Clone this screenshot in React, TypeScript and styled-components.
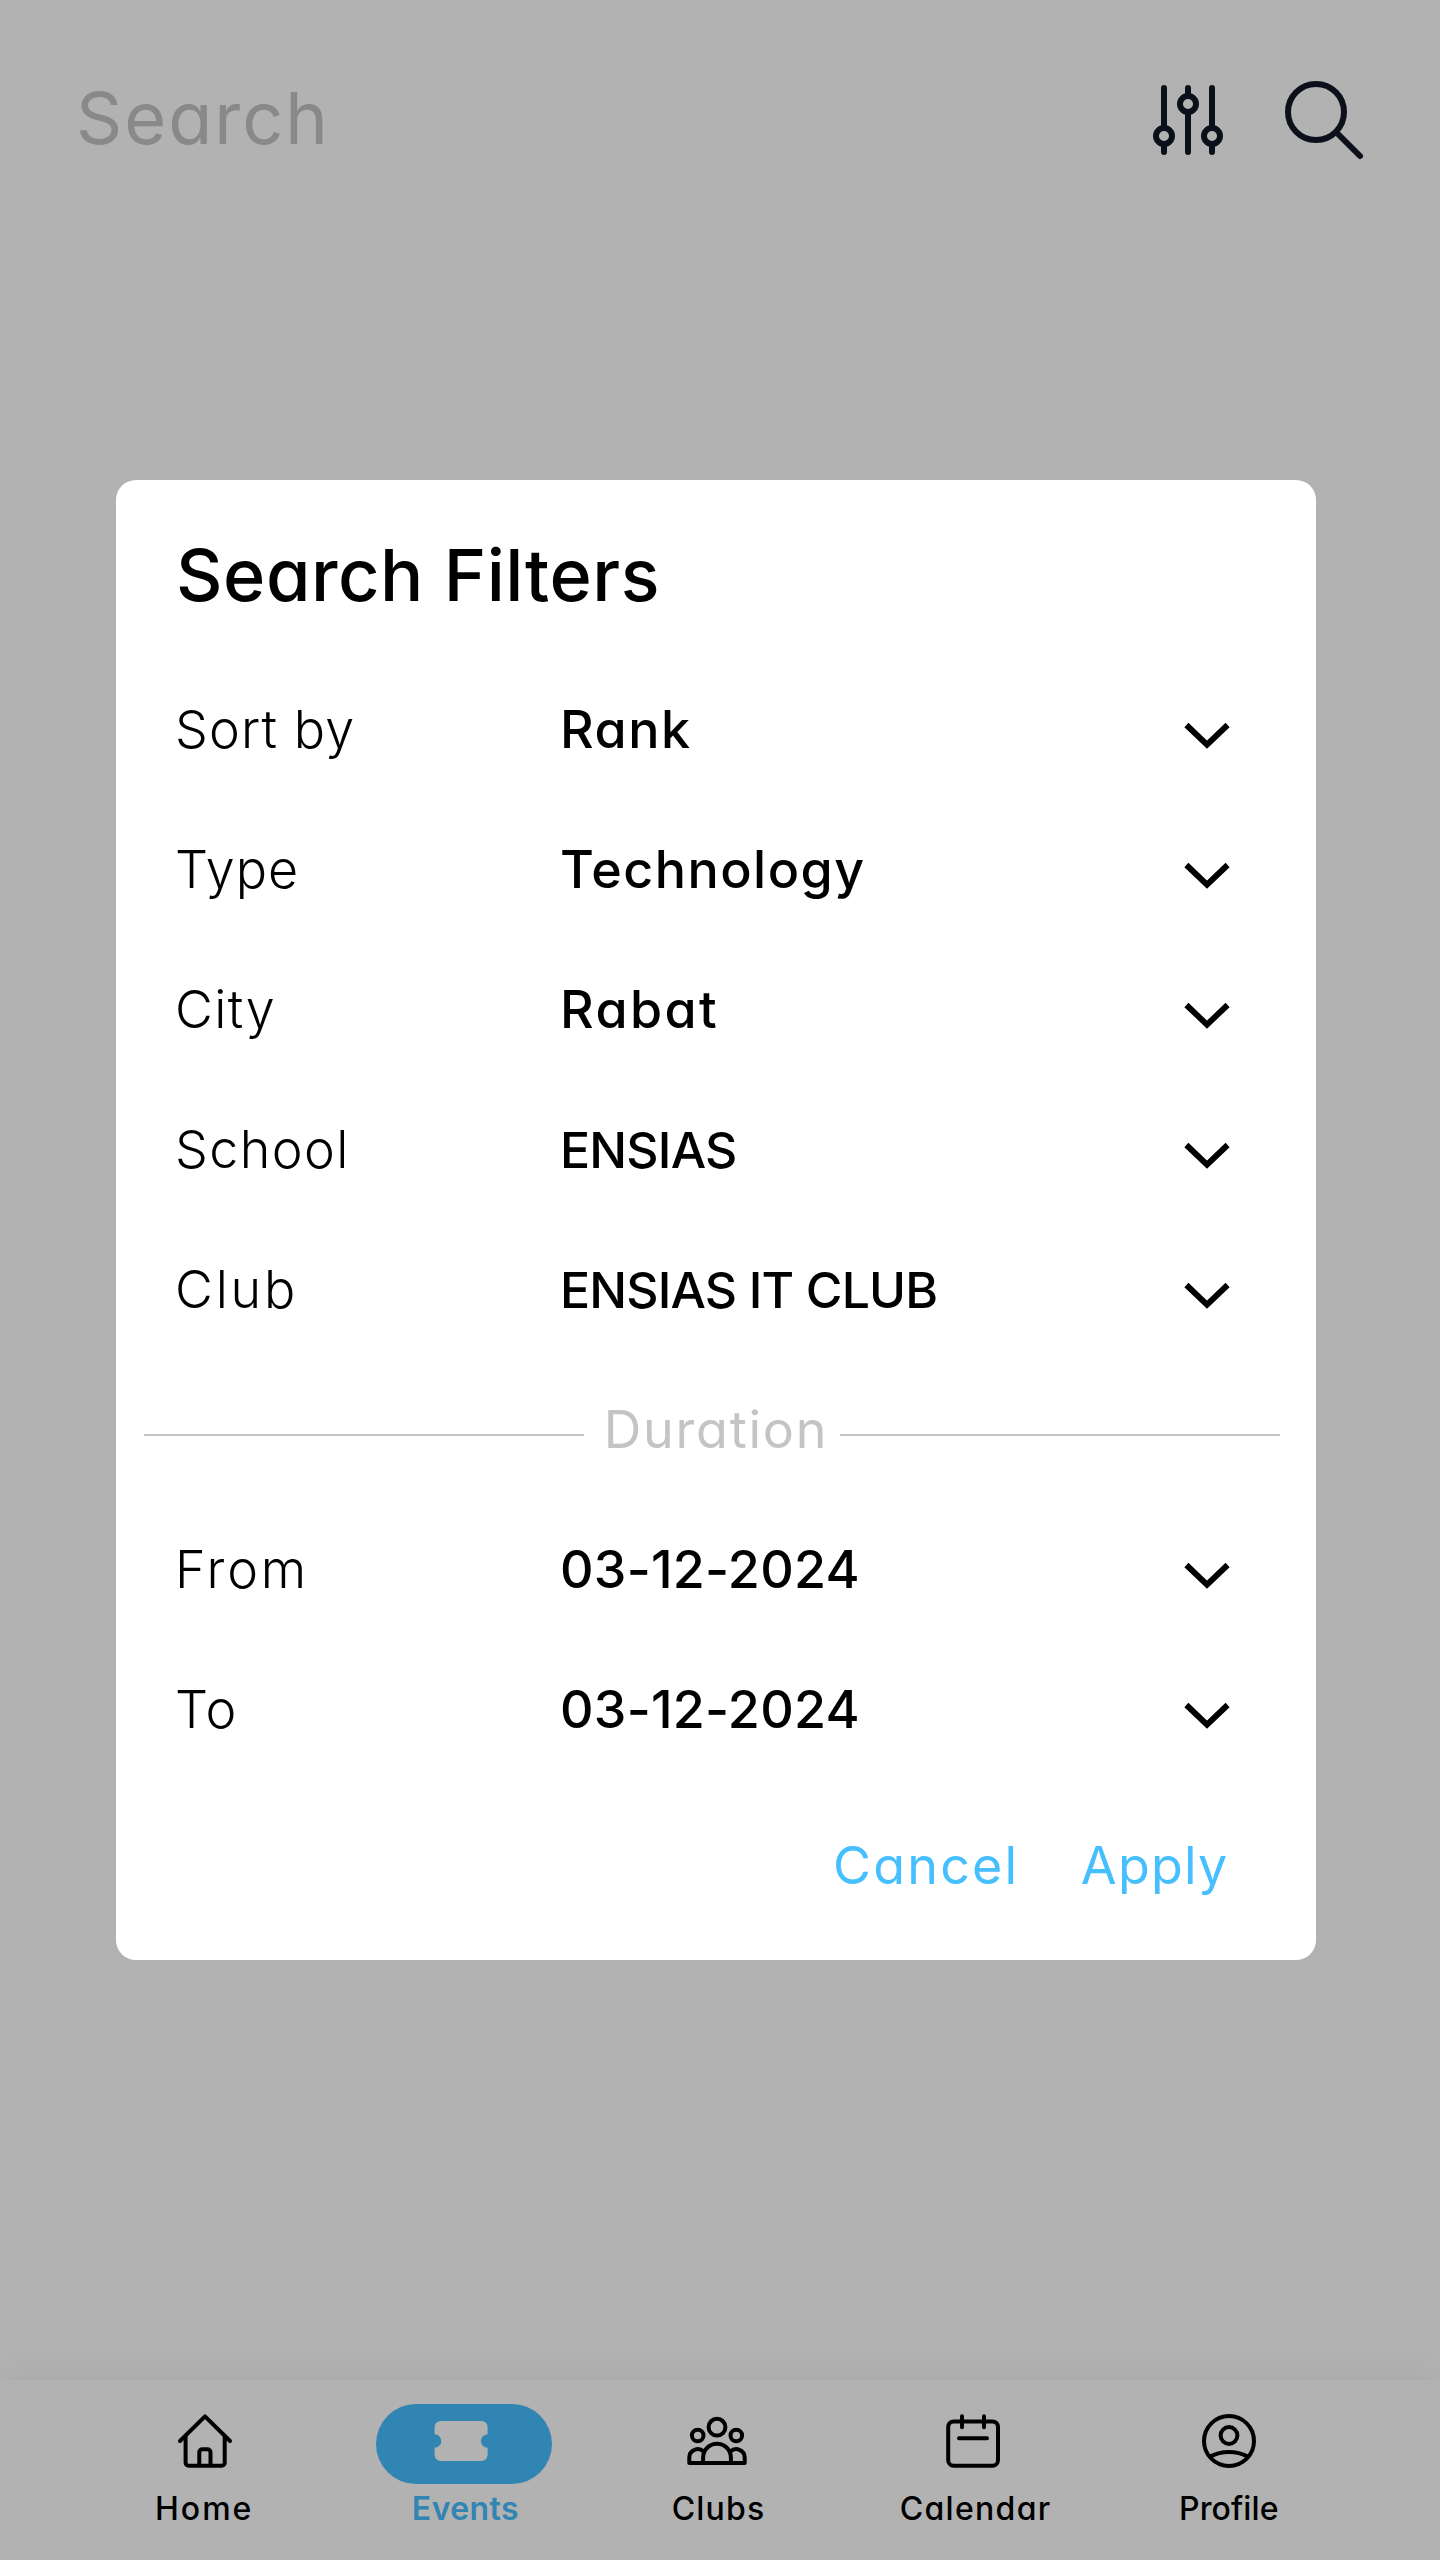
import React from "react";
import styled, { createGlobalStyle } from "styled-components";

const GlobalStyle = createGlobalStyle`
  * { box-sizing: border-box; }
  body {
    margin: 0;
    background: #ffffff;
    color: #000000;
    font-family: Inter, "Liberation Sans", sans-serif;
    font-feature-settings: "cv11";
  }
  button {
    border: 0;
    padding: 0;
    background: none;
    color: inherit;
    font: inherit;
    font-feature-settings: inherit;
  }
`;

const Screen = styled.div`
  position: relative;
  display: flex;
  flex-direction: column;
  width: 1440px;
  height: 2560px;
  overflow: hidden;
`;

const SearchHeader = styled.header`
  display: flex;
  align-items: center;
  height: 240px;
  padding: 0 68px 0 76px;
`;

const SearchField = styled.div`
  flex: 1;
  padding-bottom: 4px;
  color: #c4c4c4;
  font-size: 72px;
  line-height: 84px;
  letter-spacing: 2px;
`;

const HeaderActions = styled.div`
  display: flex;
  gap: 40px;

  svg {
    display: block;
    fill: none;
    stroke: #121826;
    stroke-width: 6;
    stroke-linecap: round;
  }
`;

const Results = styled.main`
  flex: 1;
`;

const TabBar = styled.nav`
  display: grid;
  grid-template-columns: repeat(5, 256px);
  height: 180px;
  padding: 24px 80px 0;
  background: #ffffff;
  box-shadow: 0 -4px 30px rgba(0, 0, 0, 0.06);
`;

const Tab = styled.button<{ $active?: boolean }>`
  display: flex;
  flex-direction: column;
  align-items: center;
  height: 130px;
  color: ${(p) => (p.$active ? "#46bfff" : "#000000")};
`;

const TabIcon = styled.span<{ $active?: boolean }>`
  display: flex;
  align-items: center;
  justify-content: center;
  width: 176px;
  height: 80px;
  padding: 0 6px 6px 0;
  border-radius: 40px;
  background: ${(p) => (p.$active ? "#46bfff" : "transparent")};

  svg {
    display: block;
    fill: none;
    stroke: #000000;
    stroke-width: 4;
    stroke-linecap: round;
    stroke-linejoin: round;
  }
`;

const TabLabel = styled.span<{ $weight: number; $tracking: number; $shift: number }>`
  font-size: 32px;
  line-height: 50px;
  font-weight: ${(p) => p.$weight};
  letter-spacing: ${(p) => p.$tracking}px;
  transform: translateX(${(p) => p.$shift}px);
`;

const Backdrop = styled.div`
  position: absolute;
  inset: 0;
  display: flex;
  flex-direction: column;
  align-items: flex-start;
  padding: 480px 0 0 116px;
  background: rgba(0, 0, 0, 0.3);
`;

const Dialog = styled.section`
  display: flex;
  flex-direction: column;
  width: 1200px;
  height: 1480px;
  border-radius: 20px;
  background: #ffffff;
`;

const DialogTitle = styled.h1`
  display: flex;
  align-items: center;
  height: 180px;
  margin: 0;
  padding: 8px 0 0 60px;
  font-size: 72px;
  font-weight: 530;
  letter-spacing: 0.55px;
`;

const FilterRow = styled.div`
  display: grid;
  grid-template-columns: 385px 1fr 46px;
  align-items: center;
  height: 140px;
  padding: 0 86.5px 0 59px;
  line-height: 60px;
`;

const FilterLabel = styled.span<{ $tracking: number }>`
  padding-bottom: 1px;
  font-size: 52px;
  font-weight: 300;
  letter-spacing: ${(p) => p.$tracking}px;
`;

const FilterValue = styled.span<{ $tracking: number; $size?: number }>`
  padding-bottom: 1px;
  font-size: ${(p) => p.$size ?? 52}px;
  font-weight: 530;
  letter-spacing: ${(p) => p.$tracking}px;
`;

const Chevron = styled.svg`
  display: block;
  margin-top: 12px;
  fill: none;
  stroke: #000000;
  stroke-width: 5.9;
`;

const SectionDivider = styled.div`
  display: flex;
  align-items: center;
  justify-content: space-between;
  height: 140px;
  padding: 0 36px 0 28px;
`;

const DividerLine = styled.span`
  width: 440px;
  height: 2px;
  margin-top: 10px;
  background: #c4c4c4;
`;

const DividerText = styled.span`
  padding: 0 0 1px 8px;
  color: #c4c4c4;
  font-size: 52px;
  line-height: 60px;
  letter-spacing: 1.75px;
`;

const DialogActions = styled.div`
  display: flex;
  align-items: center;
  justify-content: flex-end;
  gap: 61.5px;
  height: 180px;
  padding: 0 87.5px 8px 0;
`;

const TextButton = styled.button<{ $tracking: number }>`
  color: #46bfff;
  font-size: 52px;
  line-height: 60px;
  letter-spacing: ${(p) => p.$tracking}px;
`;

type Filter = {
  label: string;
  labelTracking: number;
  value: string;
  valueTracking: number;
  valueSize?: number;
};

const filters: Filter[] = [
  { label: "Sort by", labelTracking: 1.1, value: "Rank", valueTracking: 1.5 },
  { label: "Type", labelTracking: 1, value: "Technology", valueTracking: 1.45 },
  { label: "City", labelTracking: 1.4, value: "Rabat", valueTracking: 2.4 },
  { label: "School", labelTracking: 1.4, value: "ENSIAS", valueTracking: -0.8, valueSize: 50 },
  { label: "Club", labelTracking: 2.8, value: "ENSIAS IT CLUB", valueTracking: -0.85, valueSize: 50 },
];

const durations: Filter[] = [
  { label: "From", labelTracking: 2.8, value: "03-12-2024", valueTracking: 0.25 },
  { label: "To", labelTracking: 1.5, value: "03-12-2024", valueTracking: 0.25 },
];

const SlidersIcon = () => (
  <svg width="96" height="96" viewBox="0 0 96 96">
    <path d="M24 16V56M24 72V80M48 16V24M48 40V80M72 16V56M72 72V80" />
    <circle cx="24" cy="64" r="8" />
    <circle cx="48" cy="32" r="8" />
    <circle cx="72" cy="64" r="8" />
  </svg>
);

const SearchIcon = () => (
  <svg width="96" height="96" viewBox="0 0 96 96">
    <circle cx="40" cy="40" r="28" />
    <path d="M60.5 60.5L84 84" />
  </svg>
);

const HomeIcon = () => (
  <svg width="64" height="64" viewBox="0 0 64 64">
    <path d="M7 32L32 7.4L57 32" />
    <path d="M12.6 27V53.7A3 3 0 0 0 15.6 56.7H48.7A3 3 0 0 0 51.7 53.7V27" />
    <path d="M26.3 56V43.2A3 3 0 0 1 29.3 40.2H34.5A3 3 0 0 1 37.5 43.2V56" />
  </svg>
);

const TicketIcon = () => (
  <svg width="64" height="64" viewBox="0 0 64 64">
    <path
      d="M5.6 18a6 6 0 0 1 6-6h41a6 6 0 0 1 6 6v7.3a6.7 6.7 0 0 0 0 13.4V46a6 6 0 0 1-6 6h-41a6 6 0 0 1-6-6v-7.3a6.7 6.7 0 0 0 0-13.4z"
      fill="#ffffff"
      stroke="none"
    />
  </svg>
);

const ClubsIcon = () => (
  <svg width="64" height="64" viewBox="0 0 64 64">
    <circle cx="32" cy="18.2" r="8.4" />
    <circle cx="12.7" cy="26.5" r="5.8" />
    <circle cx="51.3" cy="26.5" r="5.8" />
    <path d="M18.1 54V48.6a13.9 13.9 0 0 1 27.8 0V54" />
    <path d="M18.6 42.6A8.4 8.4 0 0 0 4.3 48.4V54H59.7V48.4A8.4 8.4 0 0 0 45.4 42.6" />
  </svg>
);

const CalendarIcon = () => (
  <svg width="64" height="64" viewBox="0 0 64 64">
    <rect x="7.2" y="12.4" width="49.8" height="44.3" rx="5.5" />
    <path d="M21 7.2V18.2M43 7.2V18.2M18 29.2H46" />
  </svg>
);

const ProfileIcon = () => (
  <svg width="64" height="64" viewBox="0 0 64 64">
    <circle cx="32" cy="32" r="25" />
    <circle cx="32" cy="26.5" r="8.4" />
    <path d="M13 47.6A42 42 0 0 1 51 47.6" />
  </svg>
);

const tabs = [
  { label: "Home", icon: <HomeIcon />, tracking: 2, shift: -3.8 },
  { label: "Events", icon: <TicketIcon />, tracking: 0.4, shift: 1.4 },
  { label: "Clubs", icon: <ClubsIcon />, tracking: 1.2, shift: -1.4 },
  { label: "Calendar", icon: <CalendarIcon />, tracking: 1.3, shift: -0.4 },
  { label: "Profile", icon: <ProfileIcon />, tracking: 0.1, shift: -3.2 },
];

const activeTab = "Events";

const FilterLine = ({ label, labelTracking, value, valueTracking, valueSize }: Filter) => (
  <FilterRow>
    <FilterLabel $tracking={labelTracking}>{label}</FilterLabel>
    <FilterValue $tracking={valueTracking} $size={valueSize}>
      {value}
    </FilterValue>
    <Chevron width="46" height="28" viewBox="0 0 46 28">
      <path d="M2.4 3L23 22.6L43.6 3" />
    </Chevron>
  </FilterRow>
);

export default function App() {
  return (
    <>
      <GlobalStyle />
      <Screen>
        <SearchHeader>
          <SearchField>Search</SearchField>
          <HeaderActions>
            <button aria-label="Filters">
              <SlidersIcon />
            </button>
            <button aria-label="Search">
              <SearchIcon />
            </button>
          </HeaderActions>
        </SearchHeader>
        <Results />
        <TabBar>
          {tabs.map((tab) => {
            const active = tab.label === activeTab;
            return (
              <Tab key={tab.label} $active={active}>
                <TabIcon $active={active}>{tab.icon}</TabIcon>
                <TabLabel $weight={active ? 600 : 500} $tracking={tab.tracking} $shift={tab.shift}>
                  {tab.label}
                </TabLabel>
              </Tab>
            );
          })}
        </TabBar>
        <Backdrop>
          <Dialog role="dialog" aria-label="Search Filters">
            <DialogTitle>Search Filters</DialogTitle>
            {filters.map((filter) => (
              <FilterLine key={filter.label} {...filter} />
            ))}
            <SectionDivider>
              <DividerLine />
              <DividerText>Duration</DividerText>
              <DividerLine />
            </SectionDivider>
            {durations.map((filter) => (
              <FilterLine key={filter.label} {...filter} />
            ))}
            <DialogActions>
              <TextButton $tracking={2.2}>Cancel</TextButton>
              <TextButton $tracking={1.2}>Apply</TextButton>
            </DialogActions>
          </Dialog>
        </Backdrop>
      </Screen>
    </>
  );
}
